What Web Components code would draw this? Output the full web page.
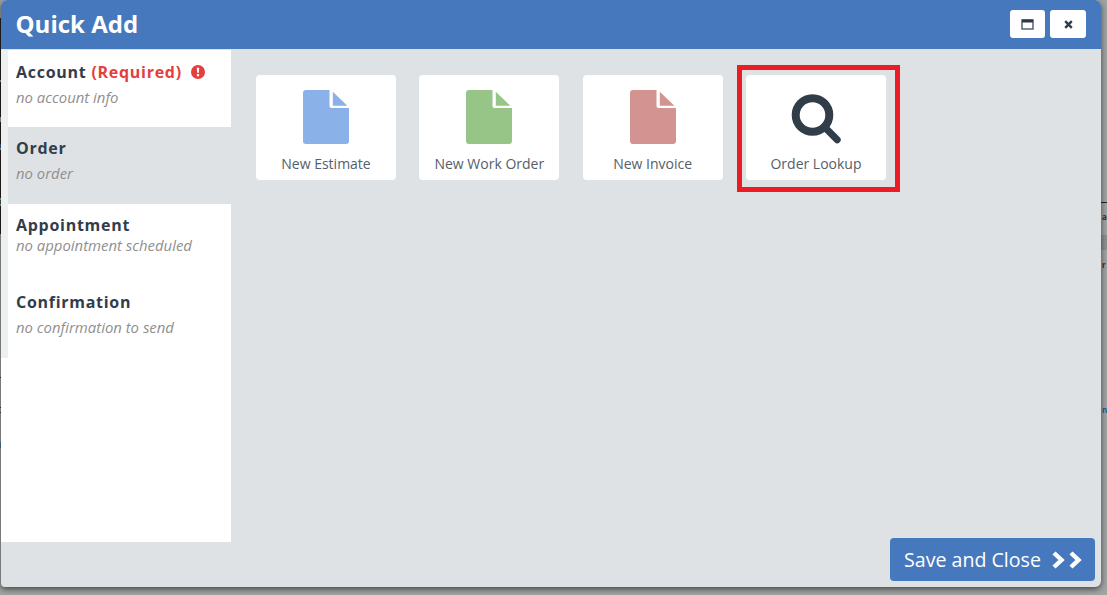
<!DOCTYPE html>
<html>
<head>
<meta charset="utf-8">
<title>Quick Add</title>
<style>
  html, body { margin: 0; height: 100%; overflow: hidden; }
  body { background: #a2a3a3; font-family: "Open Sans", sans-serif; }
</style>
</head>
<body>
<page-backdrop></page-backdrop>
<quick-add-dialog heading="Quick Add">
  <qa-tab slot="tabs" required>
    <span slot="title">Account</span>
    no account info
  </qa-tab>
  <qa-tab slot="tabs" active>
    <span slot="title">Order</span>
    no order
  </qa-tab>
  <qa-tab slot="tabs" tight>
    <span slot="title">Appointment</span>
    no appointment scheduled
  </qa-tab>
  <qa-tab slot="tabs">
    <span slot="title">Confirmation</span>
    no confirmation to send
  </qa-tab>

  <qa-card color="#8ab1e8">New Estimate</qa-card>
  <qa-card color="#97c487">New Work Order</qa-card>
  <qa-card color="#d39391">New Invoice</qa-card>
  <qa-card search marked>Order Lookup</qa-card>
</quick-add-dialog>

<script>
// what shows of the dimmed page behind the modal
class PageBackdrop extends HTMLElement {
  constructor() {
    super();
    this.attachShadow({ mode: 'open' });
    this.shadowRoot.innerHTML = `
      <style>
        :host {
          display: block;
          position: absolute;
          inset: 0;
          overflow: hidden;
          font: 700 8px "Open Sans", sans-serif;
        }
        div, span { position: absolute; }
        .left { left: 0; width: 1px; }
        .rule { left: 1100px; width: 7px; top: 202px; height: 1px; background: #222; }
        .band { left: 1100px; width: 7px; top: 235px; height: 15px; background: #8f9090; }
        span { left: 1102px; line-height: 12px; }
      </style>
      <div class="left" style="top:18px;height:62px;background:#222"></div>
      <div class="left" style="top:82px;height:35px;background:#222"></div>
      <div class="left" style="top:122px;height:22px;background:#222"></div>
      <div class="left" style="top:144px;height:4px;background:#3b5b8c"></div>
      <div class="left" style="top:150px;height:48px;background:#222"></div>
      <div class="left" style="top:200px;height:4px;background:#2f6b45"></div>
      <div class="left" style="top:206px;height:28px;background:#222"></div>
      <div class="left" style="top:377px;height:1px;background:#333"></div>
      <div class="left" style="top:407px;height:1px;background:#333"></div>
      <div class="left" style="top:412px;height:1px;background:#333"></div>
      <div class="left" style="top:442px;height:6px;background:#4a7f9a"></div>
      <div class="rule"></div>
      <div class="band"></div>
      <span style="top:211px;color:#333">a</span>
      <span style="top:259px;color:#5a2020">r</span>
      <span style="top:404px;color:#1f5f99">n</span>
    `;
  }
}

class QuickAddDialog extends HTMLElement {
  constructor() {
    super();
    this.attachShadow({ mode: 'open' });
    this.shadowRoot.innerHTML = `
      <style>
        :host {
          display: flex;
          flex-direction: column;
          position: relative;
          width: 1100px;
          height: 587px;
          margin-left: 1px;
          background: #dfe2e5;
          border-radius: 6px 6px 6px 4px;
          box-shadow: 0 2px 6px rgba(0, 0, 0, 0.6);
          overflow: hidden;
          color: #2d3748;
        }

        header {
          display: flex;
          align-items: center;
          justify-content: space-between;
          flex: none;
          height: 49px;
          padding: 0 15px 1px 14.5px;
          box-sizing: border-box;
          background: #4678bd;
        }

        h1 {
          margin: 0 0 2px;
          font-size: 24px;
          font-weight: 700;
          color: #fff;
        }

        .actions {
          display: flex;
          gap: 5px;
        }

        button {
          display: flex;
          align-items: center;
          justify-content: center;
          width: 36px;
          height: 28px;
          padding: 0;
          border: none;
          border-radius: 3px;
          background: #fff;
        }
        button:first-child { width: 35px; }

        .body {
          display: flex;
          flex: 1;
          min-height: 0;
        }

        aside {
          flex: none;
          width: 230px;
          height: 492px;
          margin-top: 1px;
          background: #fff;
        }

        .tabs {
          display: flex;
          flex-direction: column;
          padding-left: 7px;
          background: #eeefef;
        }

        main {
          display: flex;
          flex-direction: column;
          flex: 1;
          padding: 26px 6px 6px 25px;
        }

        .cards {
          display: flex;
          gap: 23.33px;
        }

        .save {
          display: flex;
          align-items: center;
          gap: 9px;
          align-self: flex-end;
          width: 205px;
          height: 43px;
          margin-top: auto;
          padding: 0 0 0 14px;
          box-sizing: border-box;
          border-radius: 4px;
          background: #4678bd;
          color: #fff;
          font: 400 19.6px "Open Sans", sans-serif;
        }
      </style>
      <header>
        <h1></h1>
        <div class="actions">
          <button aria-label="Maximize">
            <svg width="13" height="11" viewBox="0 0 13 11">
              <rect x="1" y="1" width="11" height="9" fill="none" stroke="#5a6270" stroke-width="1.5"/>
              <rect x="1" y="0.5" width="11" height="3" fill="#2d3748"/>
            </svg>
          </button>
          <button aria-label="Close">
            <svg width="9" height="9" viewBox="0 0 9 9">
              <path d="M1.2 1.2 7.8 7.8M7.8 1.2 1.2 7.8" fill="none" stroke="#323d4a" stroke-width="2.4"/>
            </svg>
          </button>
        </div>
      </header>
      <div class="body">
        <aside><div class="tabs"><slot name="tabs"></slot></div></aside>
        <main>
          <div class="cards"><slot></slot></div>
          <div class="save">
            Save and Close
            <svg width="32" height="20" viewBox="0 0 32 20">
              <path d="M4 3 11.5 10 4 17M21 3 28.5 10 21 17" fill="none" stroke="#fff" stroke-width="4.4"/>
            </svg>
          </div>
        </main>
      </div>
    `;
    this.shadowRoot.querySelector('h1').textContent = this.getAttribute('heading');
  }
}

class QaTab extends HTMLElement {
  constructor() {
    super();
    this.attachShadow({ mode: 'open' });
    this.shadowRoot.innerHTML = `
      <style>
        :host {
          display: block;
          height: 77px;
          padding: 10px 8px 0;
          box-sizing: border-box;
          background: #fff;
        }
        :host([active]) { background: #dfe2e5; }
        :host([required]) { padding-top: 11px; }

        .title {
          display: flex;
          align-items: center;
          height: 22px;
          font-size: 16px;
          font-weight: 700;
          letter-spacing: 0.72px;
          color: #323d4a;
        }

        .req {
          display: none;
          align-items: center;
          margin-left: 5px;
          color: #e53e3e;
        }
        :host([required]) .req { display: flex; }
        .req svg { margin-left: 9px; }

        .sub {
          margin-top: 5px;
          font-size: 14.9px;
          font-style: italic;
          line-height: 19px;
          color: #8f8f8f;
        }
        :host([tight]) .sub { margin-top: 0; }
      </style>
      <div class="title">
        <slot name="title"></slot>
        <span class="req">(Required)
          <svg width="14" height="14" viewBox="0 0 14 14">
            <circle cx="7" cy="7" r="7" fill="#e53e3e"/>
            <path d="M5.8 2.8h2.4l-.3 5H6.1zM5.9 9h2.2v2.2H5.9z" fill="#fff"/>
          </svg>
        </span>
      </div>
      <div class="sub"><slot></slot></div>
    `;
  }
}

class QaCard extends HTMLElement {
  constructor() {
    super();
    this.attachShadow({ mode: 'open' });
    const color = this.getAttribute('color');
    const icon = this.hasAttribute('search')
      ? `<svg width="50" height="54" viewBox="0 0 50 54">
           <circle cx="21.5" cy="25" r="16.8" fill="none" stroke="#323d4a" stroke-width="8"/>
           <path d="M35 38.5 46.2 49.8" fill="none" stroke="#323d4a" stroke-width="7" stroke-linecap="round"/>
         </svg>`
      : `<svg width="46" height="54" viewBox="0 0 46 54">
           <path d="M26.5 0v16q0 2 2 2H46v33q0 3-3 3H3q-3 0-3-3V3q0-3 3-3z" fill="${color}"/>
           <path d="M29.8 1.8 44.4 15.8H29.8z" fill="${color}"/>
         </svg>`;
    this.shadowRoot.innerHTML = `
      <style>
        :host {
          display: flex;
          flex-direction: column;
          align-items: center;
          position: relative;
          width: 140px;
          height: 105px;
          padding-top: 15px;
          box-sizing: border-box;
          border-radius: 4px;
          background: #fff;
          font-size: 14px;
          color: #555e6b;
        }
        .icon {
          display: flex;
          align-items: center;
          justify-content: center;
          height: 54px;
        }
        .label {
          margin-top: 10px;
          line-height: 19px;
        }
        .mark {
          display: none;
          position: absolute;
          top: -10px;
          left: -9px;
          right: -14px;
          bottom: -12px;
          border: 5px solid #ed1c24;
        }
        :host([marked]) .mark { display: block; }
      </style>
      <div class="icon">${icon}</div>
      <div class="label"><slot></slot></div>
      <div class="mark"></div>
    `;
  }
}

customElements.define('page-backdrop', PageBackdrop);
customElements.define('quick-add-dialog', QuickAddDialog);
customElements.define('qa-tab', QaTab);
customElements.define('qa-card', QaCard);
</script>
</body>
</html>
